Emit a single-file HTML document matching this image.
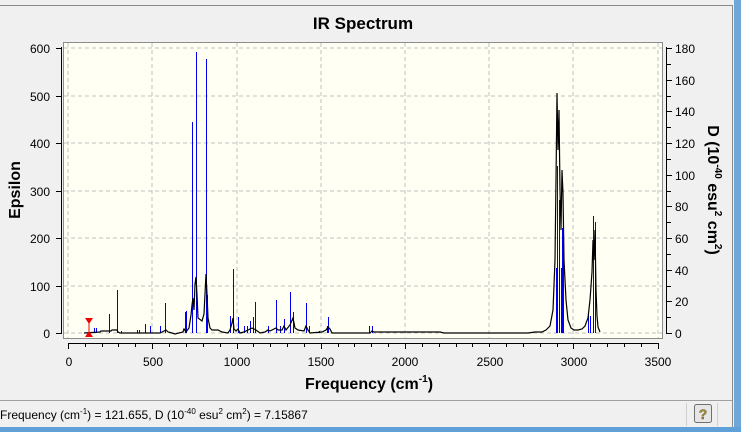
<!DOCTYPE html>
<html><head><meta charset="utf-8"><style>
body{margin:0;width:741px;height:432px;background:#f0f0f0;overflow:hidden;position:relative;font-family:"Liberation Sans",sans-serif}
.t{position:absolute;white-space:nowrap}
</style></head><body>
<svg width="741" height="432" style="position:absolute;left:0;top:0" font-family="Liberation Sans, sans-serif">
<line x1="0" y1="5.5" x2="732" y2="5.5" stroke="#8a8a8a"/>
<line x1="732.5" y1="5" x2="732.5" y2="428" stroke="#8a8a8a"/>
<rect x="734" y="0" width="7" height="432" fill="#6fa7d8"/>
<rect x="0" y="427" width="741" height="5" fill="#5fa0d8"/>
<text x="363" y="29" font-size="17" font-weight="bold" text-anchor="middle">IR Spectrum</text>
<rect x="63.5" y="42.5" width="599" height="296" fill="#fffff4" stroke="#8c8c8c"/>
<g stroke="#c0c0c0" stroke-dasharray="4,3">
<line x1="64" y1="48" x2="662" y2="48"/><line x1="64" y1="96" x2="662" y2="96"/><line x1="64" y1="143" x2="662" y2="143"/><line x1="64" y1="191" x2="662" y2="191"/><line x1="64" y1="238" x2="662" y2="238"/><line x1="64" y1="286" x2="662" y2="286"/><line x1="64" y1="333" x2="662" y2="333"/>
<line x1="68" y1="43" x2="68" y2="338"/><line x1="152" y1="43" x2="152" y2="338"/><line x1="237" y1="43" x2="237" y2="338"/><line x1="321" y1="43" x2="321" y2="338"/><line x1="405" y1="43" x2="405" y2="338"/><line x1="489" y1="43" x2="489" y2="338"/><line x1="573" y1="43" x2="573" y2="338"/><line x1="658" y1="43" x2="658" y2="338"/>
</g>
<g stroke="#0000ee" stroke-width="1">
<line x1="94.5" y1="333" x2="94.5" y2="328"/><line x1="96.5" y1="333" x2="96.5" y2="328"/>
<line x1="109.5" y1="333" x2="109.5" y2="314"/><line x1="117.5" y1="333" x2="117.5" y2="290"/>
<line x1="121.5" y1="333" x2="121.5" y2="331"/><line x1="137.5" y1="333" x2="137.5" y2="330"/><line x1="139.5" y1="333" x2="139.5" y2="330"/>
<line x1="145.5" y1="333" x2="145.5" y2="324"/><line x1="150.5" y1="333" x2="150.5" y2="326"/><line x1="160.5" y1="333" x2="160.5" y2="326"/>
<line x1="165.5" y1="333" x2="165.5" y2="303"/>
<line x1="185.5" y1="333" x2="185.5" y2="312"/><line x1="186.5" y1="333" x2="186.5" y2="311"/>
<line x1="192.5" y1="333" x2="192.5" y2="122"/><line x1="196.5" y1="333" x2="196.5" y2="52"/>
<line x1="206.5" y1="333" x2="206.5" y2="59"/><line x1="207.5" y1="333" x2="207.5" y2="295"/>
<line x1="230.5" y1="333" x2="230.5" y2="316"/><line x1="233.5" y1="333" x2="233.5" y2="269"/><line x1="238.5" y1="333" x2="238.5" y2="317"/>
<line x1="244.5" y1="333" x2="244.5" y2="326"/><line x1="247.5" y1="333" x2="247.5" y2="326"/><line x1="250.5" y1="333" x2="250.5" y2="321"/><line x1="253.5" y1="333" x2="253.5" y2="317"/><line x1="255.5" y1="333" x2="255.5" y2="302"/>
<line x1="268.5" y1="333" x2="268.5" y2="326"/><line x1="276.5" y1="333" x2="276.5" y2="300"/><line x1="280.5" y1="333" x2="280.5" y2="326"/><line x1="284.5" y1="333" x2="284.5" y2="319"/>
<line x1="290.5" y1="333" x2="290.5" y2="292"/><line x1="293.5" y1="333" x2="293.5" y2="312"/>
<line x1="306.5" y1="333" x2="306.5" y2="303"/><line x1="309.5" y1="333" x2="309.5" y2="326"/>
<line x1="319.5" y1="333" x2="319.5" y2="331"/><line x1="327.5" y1="333" x2="327.5" y2="326"/><line x1="328.5" y1="333" x2="328.5" y2="317"/>
<line x1="369.5" y1="333" x2="369.5" y2="326"/><line x1="372.5" y1="333" x2="372.5" y2="326"/>
<line x1="556.5" y1="333" x2="556.5" y2="268"/><line x1="557.5" y1="333" x2="557.5" y2="166"/><line x1="559.5" y1="333" x2="559.5" y2="200"/><line x1="561.5" y1="333" x2="561.5" y2="268"/><line x1="562.5" y1="333" x2="562.5" y2="228"/><line x1="563.5" y1="333" x2="563.5" y2="228"/>
<line x1="588.5" y1="333" x2="588.5" y2="312"/><line x1="590.5" y1="333" x2="590.5" y2="316"/><line x1="593.5" y1="333" x2="593.5" y2="216"/><line x1="595.5" y1="333" x2="595.5" y2="222"/>
</g>
<polyline fill="none" stroke="#000" stroke-width="1.2" points="84,333 100,332 101,331 111,331 112,330 117,330 118,332 120,333 160,333 164,331 166,330 168,332 172,333 175,334 183,332 184,329 186,332 189,328 191,315 192,305 193,298 194,310 195,284 196,277 197,295 198,318 202,321 204,314 205,294 206,274 207,294 208,318 210,328 212,330 218,330 222,332 228,333 230,330 232,323 233,318 234,329 236,331 238,329 240,333 244,332 248,330 252,328 256,330 260,333 265,332 268,330 270,331 276,328 278,330 282,330 284,326 286,330 290,325 293,318 295,328 298,330 304,331 306,326 308,330 310,333 322,332 326,330 328,327 330,329 332,333 370,333 372,331 374,332 440,332 444,333 528,333 535,332 542,332 546,330 550,326 553,310 555,260 556,180 557,93 558,150 559,110 560,190 561,230 562,170 563,194 564,260 566,300 568,320 571,328 574,330 578,330 582,329 585,326 588,318 590,300 592,272 593,240 594,260 595,230 596,290 597,316 598,327 600,332"/>
<path d="M85,318 h8 l-4,6 z M85,337 h8 l-4,-6 z" fill="#e00"/>
<line x1="89" y1="322" x2="89" y2="333" stroke="#e00"/>
<g stroke="#000">
<line x1="61.5" y1="47" x2="61.5" y2="334"/>
<line x1="56" y1="48.5" x2="61" y2="48.5"/><line x1="56" y1="96.5" x2="61" y2="96.5"/><line x1="56" y1="143.5" x2="61" y2="143.5"/><line x1="56" y1="191.5" x2="61" y2="191.5"/><line x1="56" y1="238.5" x2="61" y2="238.5"/><line x1="56" y1="286.5" x2="61" y2="286.5"/><line x1="56" y1="333.5" x2="61" y2="333.5"/>
<line x1="666.5" y1="47" x2="666.5" y2="334"/>
<line x1="667" y1="48.5" x2="672" y2="48.5"/><line x1="667" y1="64.5" x2="671" y2="64.5"/><line x1="667" y1="80.5" x2="672" y2="80.5"/><line x1="667" y1="96.5" x2="671" y2="96.5"/><line x1="667" y1="111.5" x2="672" y2="111.5"/><line x1="667" y1="127.5" x2="671" y2="127.5"/><line x1="667" y1="143.5" x2="672" y2="143.5"/><line x1="667" y1="159.5" x2="671" y2="159.5"/><line x1="667" y1="175.5" x2="672" y2="175.5"/><line x1="667" y1="191.5" x2="671" y2="191.5"/><line x1="667" y1="206.5" x2="672" y2="206.5"/><line x1="667" y1="222.5" x2="671" y2="222.5"/><line x1="667" y1="238.5" x2="672" y2="238.5"/><line x1="667" y1="254.5" x2="671" y2="254.5"/><line x1="667" y1="270.5" x2="672" y2="270.5"/><line x1="667" y1="286.5" x2="671" y2="286.5"/><line x1="667" y1="301.5" x2="672" y2="301.5"/><line x1="667" y1="317.5" x2="671" y2="317.5"/><line x1="667" y1="333.5" x2="672" y2="333.5"/>
<line x1="68" y1="343.5" x2="659" y2="343.5"/>
</g>
<path id="tk" stroke="#000" d="M68.5,343v6M85.5,343v4M102.5,343v4M118.5,343v4M135.5,343v4M152.5,343v6M169.5,343v4M186.5,343v4M203.5,343v4M220.5,343v4M237.5,343v6M253.5,343v4M270.5,343v4M287.5,343v4M304.5,343v4M321.5,343v6M338.5,343v4M354.5,343v4M371.5,343v4M388.5,343v4M405.5,343v6M422.5,343v4M439.5,343v4M456.5,343v4M472.5,343v4M489.5,343v4M506.5,343v4M523.5,343v4M540.5,343v4M557.5,343v4M573.5,343v6M590.5,343v4M607.5,343v4M624.5,343v4M641.5,343v4M658.5,343v6"/>
<g font-size="12" text-anchor="end">
<text x="50" y="53">600</text><text x="50" y="101">500</text><text x="50" y="148">400</text><text x="50" y="196">300</text><text x="50" y="243">200</text><text x="50" y="291">100</text><text x="50" y="338">0</text>
</g>
<g font-size="12">
<text x="675" y="53">180</text><text x="675" y="85">160</text><text x="675" y="116">140</text><text x="675" y="148">120</text><text x="675" y="180">100</text><text x="675" y="211">80</text><text x="675" y="243">60</text><text x="675" y="275">40</text><text x="675" y="306">20</text><text x="675" y="338">0</text>
</g>
<g font-size="12" text-anchor="middle">
<text x="69" y="366">0</text><text x="153" y="366">500</text><text x="237" y="366">1000</text><text x="321" y="366">1500</text><text x="405" y="366">2000</text><text x="490" y="366">2500</text><text x="574" y="366">3000</text><text x="658" y="366">3500</text>
</g>
<text x="369" y="389" font-size="16" font-weight="bold" text-anchor="middle">Frequency (cm<tspan font-size="10" dy="-7">-1</tspan><tspan dy="7">)</tspan></text>
<text transform="translate(20,190) rotate(-90)" font-size="16" font-weight="bold" text-anchor="middle">Epsilon</text>
<text transform="translate(708,190) rotate(90)" font-size="16" font-weight="bold" text-anchor="middle">D (10<tspan font-size="10" dy="-7">-40</tspan><tspan dy="7"> esu</tspan><tspan font-size="10" dy="-7">2</tspan><tspan dy="7"> cm</tspan><tspan font-size="10" dy="-7">2</tspan><tspan dy="7">)</tspan></text>
<line x1="0" y1="400.5" x2="732" y2="400.5" stroke="#a0a0a0"/>
<text x="0" y="419" font-size="12">Frequency (cm<tspan font-size="8" dy="-5">-1</tspan><tspan dy="5">) = 121.655, D (10</tspan><tspan font-size="8" dy="-5">-40</tspan><tspan dy="5"> esu</tspan><tspan font-size="8" dy="-5">2</tspan><tspan dy="5"> cm</tspan><tspan font-size="8" dy="-5">2</tspan><tspan dy="5">) = 7.15867</tspan></text>
<line x1="686.5" y1="403" x2="686.5" y2="426" stroke="#d0d0d0"/>
<line x1="717.5" y1="403" x2="717.5" y2="426" stroke="#d0d0d0"/>
<rect x="694.5" y="404.5" width="17" height="18" rx="2" fill="#e6e6e6" stroke="#707070"/>
<text x="703" y="419" font-size="14" font-weight="bold" fill="#b09020" text-anchor="middle" stroke="#555" stroke-width="0.4">?</text>
</svg>
</body></html>
